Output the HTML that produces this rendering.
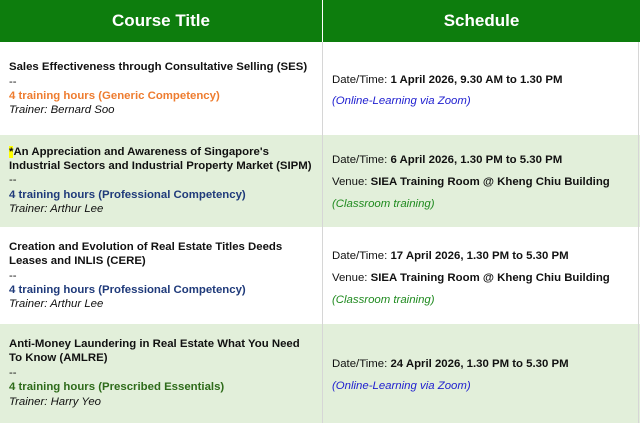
<!DOCTYPE html>
<html><head><meta charset="utf-8"><style>
body{margin:0;width:640px;height:423px;overflow:hidden;background:#fff;font-family:"Liberation Sans",Arial,sans-serif;position:relative}
.h{position:absolute;top:0;height:42px;background:#0d7d0d;color:#fff;font-weight:bold;font-size:17px;line-height:42px;text-align:center}
.bg{position:absolute;left:0;width:640px;background:#e2efda}
.t{position:absolute;white-space:nowrap;font-size:11.4px;line-height:14px;color:#111}
.b{font-weight:bold}
.i{font-style:italic}
.o{color:#ee7c2f;font-weight:bold}
.n{color:#1f3a7a;font-weight:bold}
.g{color:#2e6b1a;font-weight:bold}
.gi{color:#1f8a1f;font-style:italic}
.bl{color:#2020d0;font-style:italic}
.v{position:absolute;top:42px;width:1px;height:381px;background:#d6d6d6}
</style></head><body>
<div class="h" style="left:0;width:322px">Course Title</div>
<div class="h" style="left:323px;width:317px">Schedule</div>
<div class="bg" style="top:135px;height:92px"></div>
<div class="bg" style="top:324px;height:99px"></div>
<div class="v" style="left:322px"></div>
<div class="v" style="left:638px"></div>

<div class="t b" style="left:9px;top:60px">Sales Effectiveness through Consultative Selling (SES)</div>
<div class="t" style="left:9px;top:75px">--</div>
<div class="t o" style="left:9px;top:89px">4 training hours (Generic Competency)</div>
<div class="t i" style="left:9px;top:103px">Trainer: Bernard Soo</div>

<div class="t b" style="left:9px;top:145px"><span style="background:#ffff00">*</span>An Appreciation and Awareness of Singapore's</div>
<div class="t b" style="left:9px;top:159px">Industrial Sectors and Industrial Property Market (SIPM)</div>
<div class="t" style="left:9px;top:173px">--</div>
<div class="t n" style="left:9px;top:188px">4 training hours (Professional Competency)</div>
<div class="t i" style="left:9px;top:202px">Trainer: Arthur Lee</div>

<div class="t b" style="left:9px;top:240px">Creation and Evolution of Real Estate Titles Deeds</div>
<div class="t b" style="left:9px;top:254px">Leases and INLIS (CERE)</div>
<div class="t" style="left:9px;top:269px">--</div>
<div class="t n" style="left:9px;top:283px">4 training hours (Professional Competency)</div>
<div class="t i" style="left:9px;top:297px">Trainer: Arthur Lee</div>

<div class="t b" style="left:9px;top:337px">Anti-Money Laundering in Real Estate What You Need</div>
<div class="t b" style="left:9px;top:351px">To Know (AMLRE)</div>
<div class="t" style="left:9px;top:366px">--</div>
<div class="t g" style="left:9px;top:380px">4 training hours (Prescribed Essentials)</div>
<div class="t i" style="left:9px;top:395px">Trainer: Harry Yeo</div>

<div class="t" style="left:332px;top:73px">Date/Time: <b>1 April 2026, 9.30 AM to 1.30 PM</b></div>
<div class="t bl" style="left:332px;top:94px">(Online-Learning via Zoom)</div>

<div class="t" style="left:332px;top:153px">Date/Time: <b>6 April 2026, 1.30 PM to 5.30 PM</b></div>
<div class="t" style="left:332px;top:175px">Venue: <b>SIEA Training Room @ Kheng Chiu Building</b></div>
<div class="t gi" style="left:332px;top:197px">(Classroom training)</div>

<div class="t" style="left:332px;top:249px">Date/Time: <b>17 April 2026, 1.30 PM to 5.30 PM</b></div>
<div class="t" style="left:332px;top:271px">Venue: <b>SIEA Training Room @ Kheng Chiu Building</b></div>
<div class="t gi" style="left:332px;top:293px">(Classroom training)</div>

<div class="t" style="left:332px;top:357px">Date/Time: <b>24 April 2026, 1.30 PM to 5.30 PM</b></div>
<div class="t bl" style="left:332px;top:379px">(Online-Learning via Zoom)</div>
</body></html>
